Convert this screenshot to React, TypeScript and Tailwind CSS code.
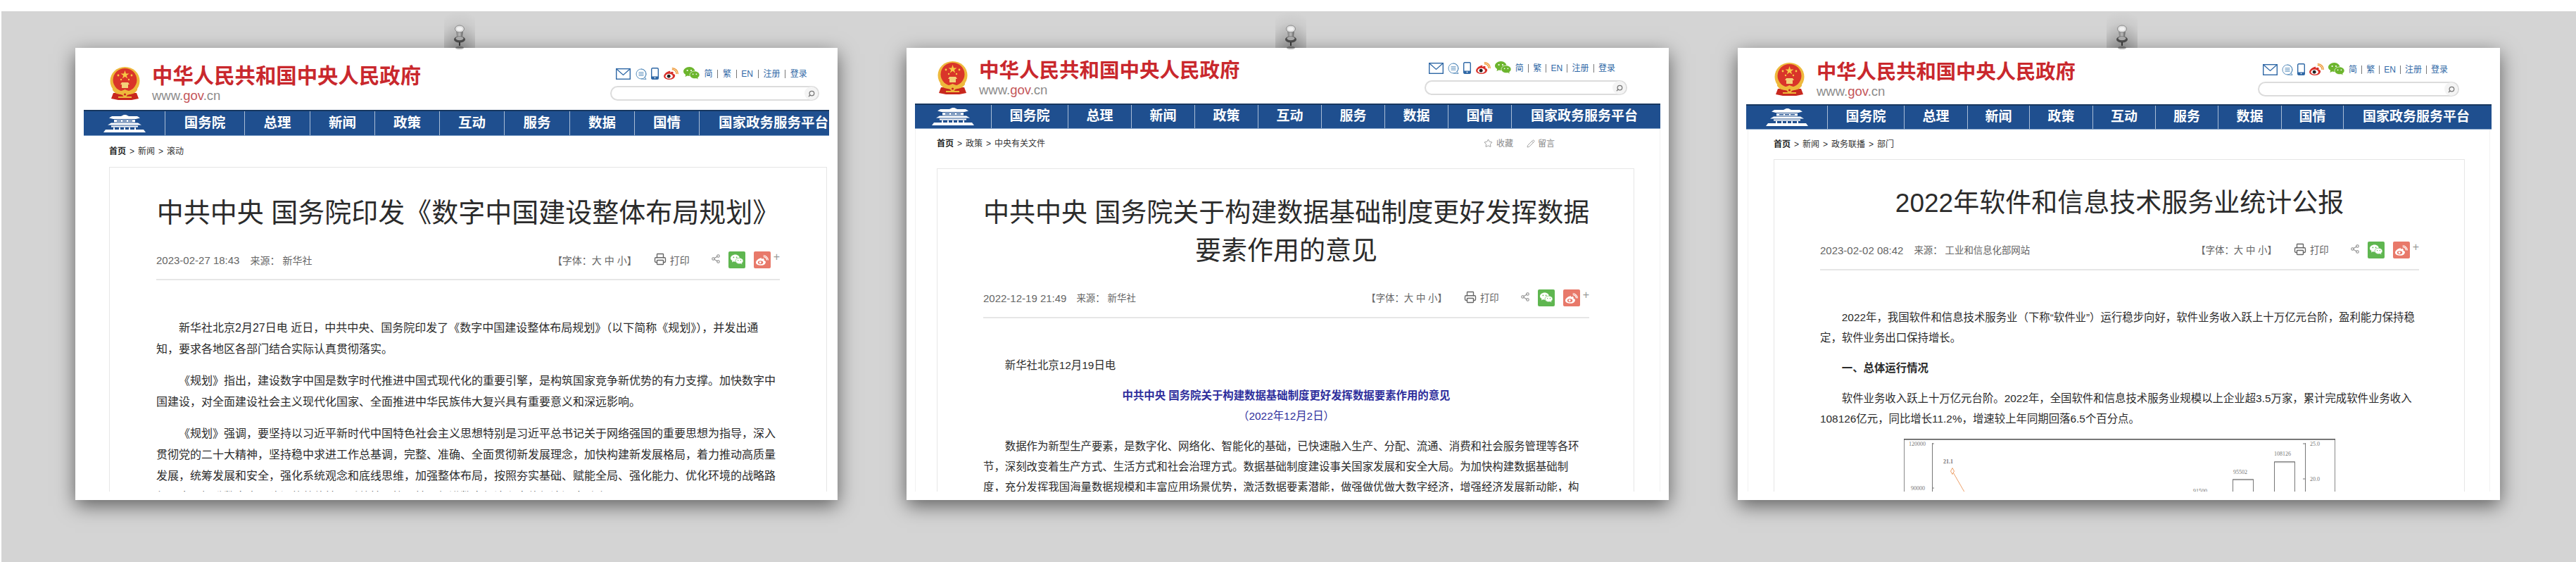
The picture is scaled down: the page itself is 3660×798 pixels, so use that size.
import React from 'react';
import { Printer, Share2, Star, Pencil, Search } from 'lucide-react';

const FONT = "font-['Liberation_Sans','Noto_Sans_CJK_SC',sans-serif]";

const Emblem = () => (
  <svg viewBox="0 0 43 47" className="w-[43px] h-[47px] shrink-0">
    <path d="M5 37 L2 45 L12 47 L31 47 L41 45 L38 37 Z" fill="#c8281e" />
    <ellipse cx="21.5" cy="20" rx="21" ry="20" fill="#eeb93c" />
    <ellipse cx="21.5" cy="18.5" rx="17" ry="16.5" fill="#d9352a" />
    <polygon points="21.5,5 23,9.5 27.5,9.5 23.8,12.2 25.2,16.5 21.5,13.8 17.8,16.5 19.2,12.2 15.5,9.5 20,9.5" fill="#f6c945" />
    <circle cx="12" cy="12" r="1.4" fill="#f6c945" />
    <circle cx="31" cy="12" r="1.4" fill="#f6c945" />
    <circle cx="16" cy="18" r="1.2" fill="#f6c945" />
    <circle cx="27" cy="18" r="1.2" fill="#f6c945" />
    <path d="M15 25 L17 22 L26 22 L28 25 L26 25 L26 30 L17 30 L17 25 Z" fill="#f3d27a" />
    <path d="M4 28 C9 37 15 35 21.5 32 C28 35 34 37 39 28 L39 33 C33 41 27 39 21.5 36 C16 39 10 41 4 33 Z" fill="#eeb93c" />
    <circle cx="21.5" cy="39" r="3.4" fill="#eeb93c" />
    <circle cx="21.5" cy="39" r="1.6" fill="#c8281e" />
    <rect x="12" y="42" width="19" height="2" fill="#eeb93c" />
  </svg>
);

const HomeIcon = () => (
  <svg viewBox="0 0 60 25" className="w-[60px] h-[25px]">
    <g fill="#ffffff">
      <path d="M29 0 L32 0 L36 2 L48 2 L52 4.5 L46 6 L14 6 L8 4.5 L12 2 L25 2 Z" />
      <rect x="15" y="7" width="30" height="3.5" />
      <path d="M11 11.5 L49 11.5 L54 14.5 L6 14.5 Z" />
      <rect x="11" y="15.5" width="38" height="2" />
      <path d="M3 21 L57 21 L60 25 L0 25 Z" />
      <rect x="14" y="18" width="2" height="3" />
      <rect x="22" y="18" width="2" height="3" />
      <rect x="29" y="18" width="2" height="3" />
      <rect x="36" y="18" width="2" height="3" />
      <rect x="44" y="18" width="2" height="3" />
    </g>
    <g fill="#1f4f8f">
      <rect x="19" y="8" width="6" height="1.4" />
      <rect x="27" y="8" width="6" height="1.4" />
      <rect x="35" y="8" width="6" height="1.4" />
    </g>
  </svg>
);

const WeiboColor = () => (
  <svg viewBox="0 0 22 18" className="w-[21px] h-[17px] shrink-0">
    <path d="M9 5 C4 6 0 10 0 13 C0 16 4 18 9 18 C14 18 17 15 17 12 C17 10 15 9.5 14 9.5 C15 7 14 6 12.5 6 C11.5 6 10 7 9.5 7.5 C10 5.5 10 4.8 9 5 Z" fill="#d8302a" />
    <ellipse cx="8" cy="13" rx="5.5" ry="3.8" fill="#ffffff" />
    <circle cx="7.5" cy="13" r="2.6" fill="#222222" />
    <path d="M13 3 A6 6 0 0 1 19 9" stroke="#ee9a3a" strokeWidth="1.6" fill="none" strokeLinecap="round" />
    <path d="M13 0.8 A8.5 8.5 0 0 1 21.3 9" stroke="#ee9a3a" strokeWidth="1.6" fill="none" strokeLinecap="round" />
  </svg>
);

const WechatColor = () => (
  <svg viewBox="0 0 23 19" className="w-[23px] h-[19px] shrink-0">
    <path d="M8.5 0 C13 0 16.5 3 16.5 6.5 C16.5 10 13 13 8.5 13 C7.5 13 6.5 12.8 5.5 12.5 L2.5 14 L3.2 11 C1.2 9.8 0 8.2 0 6.5 C0 3 4 0 8.5 0 Z" fill="#6cb52d" />
    <path d="M16 6 C19.8 6 23 8.4 23 11.3 C23 12.8 22.1 14.2 20.6 15.2 L21.2 18 L18.5 16.4 C17.7 16.6 16.9 16.7 16 16.7 C12.2 16.7 9 14.3 9 11.3 C9 8.4 12.2 6 16 6 Z" fill="#6cb52d" stroke="#ffffff" strokeWidth="0.7" />
    <circle cx="5.6" cy="5" r="1.1" fill="#ffffff" />
    <circle cx="11" cy="5" r="1.1" fill="#ffffff" />
    <circle cx="13.6" cy="10.3" r="0.9" fill="#ffffff" />
    <circle cx="18.4" cy="10.3" r="0.9" fill="#ffffff" />
  </svg>
);

const TopIcons = ({ className }: { className: string }) => (
  <div className={`flex items-center justify-between h-[19px] text-[12px] text-[#2f68a6] ${className}`}>
    <svg viewBox="0 0 21 16" className="w-[21px] h-[16px] shrink-0">
      <rect x="0.7" y="0.7" width="19.6" height="14.6" fill="none" stroke="#2f68a6" strokeWidth="1.4" />
      <path d="M1 1 L10.5 9.5 L20 1" fill="none" stroke="#2f68a6" strokeWidth="1.3" />
    </svg>
    <svg viewBox="0 0 16 16" className="w-[16px] h-[16px] shrink-0">
      <path d="M8 1 A7 7 0 1 1 8 15 L15 15.5 L13.2 12.5 A7 7 0 0 0 8 1 Z M8 1 A7 7 0 0 0 8 15" fill="none" stroke="#5b8fbd" strokeWidth="1" />
      <path d="M4.5 5.8 H11.5 M4.5 8 H11.5 M4.5 10.2 H11.5" stroke="#5b8fbd" strokeWidth="1" />
    </svg>
    <svg viewBox="0 0 11 17" className="w-[11px] h-[17px] shrink-0">
      <rect x="0.7" y="0.7" width="9.6" height="15.6" rx="1.5" fill="#ffffff" stroke="#2f68a6" strokeWidth="1.4" />
      <rect x="0.7" y="12.5" width="9.6" height="3.8" fill="#2f68a6" />
      <circle cx="5.5" cy="14.4" r="0.9" fill="#ffffff" />
    </svg>
    <WeiboColor />
    <WechatColor />
    <span>简</span>
    <span className="w-px h-[12px] bg-[#777777]" />
    <span>繁</span>
    <span className="w-px h-[12px] bg-[#777777]" />
    <span>EN</span>
    <span className="w-px h-[12px] bg-[#777777]" />
    <span>注册</span>
    <span className="w-px h-[12px] bg-[#777777]" />
    <span>登录</span>
  </div>
);

const SearchBox = () => (
  <div className="flex items-center justify-end h-[21px] rounded-full border-2 border-[#dcdcdc] bg-white">
    <span className="flex items-center justify-center w-[19px] h-[19px] rounded-full bg-[#f4f4f4]">
      <Search className="w-[10px] h-[10px] text-[#777777] -scale-x-100" strokeWidth={3} />
    </span>
  </div>
);

const MetaRight = ({ className }: { className: string }) => (
  <div className={`flex items-center text-[#666666] ${className}`}>
    <span className="whitespace-nowrap mt-[3px]">【字体：大 中 小】</span>
    <Printer className="w-[18px] h-[18px] ml-[24px] mb-[3px] text-[#666666]" strokeWidth={1.8} />
    <span className="ml-[5px] mt-[3px]">打印</span>
    <Share2 className="w-[14px] h-[15px] ml-[30px] mb-[4px] text-[#888888]" strokeWidth={1.8} />
    <span className="flex items-center justify-center w-[24px] h-[24px] ml-[11px] rounded-[2px] bg-[#5fb650]">
      <svg viewBox="0 0 23 19" className="w-[18px] h-[16px]">
        <path d="M8.5 0 C13 0 16.5 3 16.5 6.5 C16.5 10 13 13 8.5 13 C7.5 13 6.5 12.8 5.5 12.5 L2.5 14 L3.2 11 C1.2 9.8 0 8.2 0 6.5 C0 3 4 0 8.5 0 Z" fill="#ffffff" />
        <path d="M16 6 C19.8 6 23 8.4 23 11.3 C23 12.8 22.1 14.2 20.6 15.2 L21.2 18 L18.5 16.4 C17.7 16.6 16.9 16.7 16 16.7 C12.2 16.7 9 14.3 9 11.3 C9 8.4 12.2 6 16 6 Z" fill="#ffffff" stroke="#5fb650" strokeWidth="0.8" />
        <circle cx="5.6" cy="5" r="1.1" fill="#5fb650" />
        <circle cx="11" cy="5" r="1.1" fill="#5fb650" />
        <circle cx="13.6" cy="10.3" r="0.9" fill="#5fb650" />
        <circle cx="18.4" cy="10.3" r="0.9" fill="#5fb650" />
      </svg>
    </span>
    <span className="flex items-center justify-center w-[24px] h-[24px] ml-[12px] rounded-[2px] bg-[#e8796a]">
      <svg viewBox="0 0 22 18" className="w-[18px] h-[15px]">
        <path d="M9 5 C4 6 0 10 0 13 C0 16 4 18 9 18 C14 18 17 15 17 12 C17 10 15 9.5 14 9.5 C15 7 14 6 12.5 6 C11.5 6 10 7 9.5 7.5 C10 5.5 10 4.8 9 5 Z" fill="#ffffff" />
        <ellipse cx="8" cy="13" rx="4.6" ry="3" fill="#e8796a" />
        <circle cx="7.5" cy="13" r="1.8" fill="#ffffff" />
        <path d="M13 3 A6 6 0 0 1 19 9" stroke="#ffffff" strokeWidth="1.4" fill="none" />
        <path d="M13 0.8 A8.5 8.5 0 0 1 21.3 9" stroke="#ffffff" strokeWidth="1.4" fill="none" />
      </svg>
    </span>
    <span className="ml-[4px] mb-[8px] text-[16px] leading-none text-[#999999]">+</span>
  </div>
);

const Pin = () => (
  <svg viewBox="0 0 80 56" className="absolute -top-[52px] left-1/2 ml-[-36px] w-[80px] h-[56px] z-10 pointer-events-none">
    <defs>
      <radialGradient id="pinHalo" cx="50%" cy="100%" r="100%">
        <stop offset="0%" stopColor="#000000" stopOpacity="0.28" />
        <stop offset="70%" stopColor="#000000" stopOpacity="0.04" />
        <stop offset="100%" stopColor="#000000" stopOpacity="0" />
      </radialGradient>
      <linearGradient id="pinBody" x1="0" x2="1" y1="0" y2="0">
        <stop offset="0%" stopColor="#777777" />
        <stop offset="50%" stopColor="#bdbdbd" />
        <stop offset="100%" stopColor="#555555" />
      </linearGradient>
    </defs>
    <rect x="18" y="0" width="44" height="52" fill="url(#pinHalo)" />
    <path d="M35 26 L45 26 L44 36 L36 36 Z" fill="url(#pinBody)" />
    <ellipse cx="40" cy="25" rx="6.5" ry="5" fill="#dddddd" stroke="#8a8a8a" strokeWidth="1" />
    <ellipse cx="40" cy="25" rx="4" ry="2.8" fill="#f2f2f2" />
    <ellipse cx="40" cy="40" rx="8" ry="4.5" fill="#4a4a4a" />
    <ellipse cx="40" cy="38.5" rx="5.5" ry="2.8" fill="#a8a8a8" />
    <rect x="39" y="44" width="2" height="5" fill="#333333" />
    <ellipse cx="40" cy="52" rx="6" ry="2" fill="#000000" opacity="0.3" />
  </svg>
);

const Chart = () => (
  <svg viewBox="0 0 613 100" className="block mx-auto w-[613px] h-[100px]">
    <rect x="0.5" y="0.75" width="612" height="110" fill="none" stroke="#888888" strokeWidth="1" />
    <path d="M0 0.75 H613" stroke="#555555" strokeWidth="1.5" />
    <path d="M40.5 6 V100 M570.5 6 V100" stroke="#777777" strokeWidth="1" />
    <path d="M40.5 7 H43 M40.5 70 H43 M570.5 7 H567 M570.5 57 H567" stroke="#777777" strokeWidth="1" />
    <g fontSize="8" fill="#777777" fontFamily="'Liberation Serif', serif">
      <text x="7" y="10">120000</text>
      <text x="10" y="73">90000</text>
      <text x="577" y="10">25.0</text>
      <text x="577" y="60">20.0</text>
      <text x="56" y="35" fontWeight="700">21.1</text>
      <text x="468" y="50">95502</text>
      <text x="526" y="24">108126</text>
      <text x="411" y="77">91500</text>
    </g>
    <path d="M69 46 L103 105" stroke="#eda06a" strokeWidth="1" />
    <path d="M69 41.5 L71.5 46 L69 50.5 L66.5 46 Z" fill="#ffffff" stroke="#eda06a" strokeWidth="1" />
    <path d="M467.5 110 V57.5 H496.5 V110" fill="none" stroke="#777777" strokeWidth="1" />
    <path d="M526.5 110 V32.5 H555.5 V110" fill="none" stroke="#777777" strokeWidth="1" />
    <path d="M468 58.5 H496 M527 33.5 H555" stroke="#bbbbbb" strokeWidth="1.5" />
  </svg>
);

interface PageConfig {
  headerClass: string;
  iconsClass: string;
  rightClass: string;
  titleClass: string;
  logoGapClass: string;
  navCells: string[];
  navFontClass: string;
  navClass: string;
  wrapClass: string;
  crumbClass: string;
  innerClass: string;
  titleTopClass: string;
  metaTopClass: string;
  metaTextClass: string;
  bodyClass: string;
  crumbs: string[];
  actions?: boolean;
  heading: React.ReactNode;
  date: string;
  source: string;
  dateGapClass: string;
  children: React.ReactNode;
}

const NAV = ['国务院', '总理', '新闻', '政策', '互动', '服务', '数据', '国情'];

const Page = (p: PageConfig) => (
  <div className="relative flex flex-col w-[1083px] h-[642px] shrink-0 bg-white pb-[12px] shadow-[0_8px_26px_rgba(0,0,0,0.55)]">
    <Pin />
    <div className={`flex items-start justify-between shrink-0 ${p.headerClass}`}>
      <div className={`flex items-start ${p.logoGapClass}`}>
        <Emblem />
        <div className="-mt-[5.5px]">
          <div className={`font-bold leading-[36px] text-[#c9282d] whitespace-nowrap ${p.titleClass}`}>中华人民共和国中央人民政府</div>
          <div className="text-[18.5px] leading-[18px] mt-[1px] text-[#8c8c8c]">
            www.<span className="text-[#c4565a]">gov</span>.cn
          </div>
        </div>
      </div>
      <div className={`flex flex-col gap-[8px] ${p.rightClass}`}>
        <TopIcons className={p.iconsClass} />
        <SearchBox />
      </div>
    </div>
    <div className={`flex shrink-0 overflow-hidden bg-[#1f4f8f] border-t-2 border-t-[#17375f] border-b border-b-[#7f9fc6] text-white font-bold ${p.navClass} ${p.navFontClass}`}>
      <div className={`flex items-center justify-center shrink-0 ${p.navCells[0]}`}>
        <HomeIcon />
      </div>
      {NAV.map((n, i) => (
        <div key={n} className={`flex items-center justify-center shrink-0 border-l border-l-[#a9bdd6] ${p.navCells[i + 1]}`}>
          {n}
        </div>
      ))}
      <div className={`flex items-center shrink-0 pl-[27px] whitespace-nowrap border-l border-l-[#a9bdd6] ${p.navCells[9]}`}>国家政务服务平台</div>
    </div>
    <div className={`flex flex-col flex-1 min-h-0 ${p.wrapClass}`}>
      <div className={`flex items-center justify-between shrink-0 text-[12px] text-[#333333] ${p.crumbClass}`}>
        <div className="flex items-center gap-[5px]">
          <span className="font-bold text-[#222222]">首页</span>
          {p.crumbs.map((c) => (
            <React.Fragment key={c}>
              <span>&gt;</span>
              <span>{c}</span>
            </React.Fragment>
          ))}
        </div>
        {p.actions && (
          <div className="flex items-center mr-[113px] text-[#888888]">
            <Star className="w-[13px] h-[13px]" strokeWidth={1.5} />
            <span className="ml-[5px]">收藏</span>
            <Pencil className="w-[12px] h-[12px] ml-[19px]" strokeWidth={1.5} />
            <span className="ml-[4px]">留言</span>
          </div>
        )}
      </div>
      <div className="flex-1 min-h-0 overflow-hidden border-x border-t border-[#e6e6e6]">
        <div className={p.innerClass}>
          <h1 className={`text-center leading-[54px] font-normal whitespace-nowrap text-[#2b2b2b] ${p.titleTopClass}`}>{p.heading}</h1>
          <div className={`flex items-center justify-between h-[24px] ${p.metaTopClass}`}>
            <div className={`flex items-center text-[#666666] mt-[3px] ${p.metaTextClass}`}>
              <span className={`text-[15px] ${p.dateGapClass}`}>{p.date}</span>
              <span className="whitespace-nowrap mr-[4px]">来源：</span>
              <span className="whitespace-nowrap">{p.source}</span>
            </div>
            <MetaRight className={p.metaTextClass} />
          </div>
          <div className="border-b-2 border-[#e6e6e6] mt-[15px]" />
          <div className={`text-[#2b2b2b] ${p.bodyClass}`}>{p.children}</div>
        </div>
      </div>
    </div>
  </div>
);

const P1 = 'indent-[2em] text-[16px] leading-[30px] mb-[15px]';
const P2 = 'indent-[2em] text-[15.4px] leading-[29px] mb-[14px]';

const App: React.FC = () => {
  return (
    <div className={`bg-white w-[3660px] h-[798px] pt-[16px] pl-[2px] overflow-hidden ${FONT}`}>
      <div className="flex items-start gap-[98px] h-[782px] bg-[#d4d4d4] pt-[52px] pl-[105px]">
        <Page
          headerClass="h-[88px] pt-[27px] pl-[49px] pr-[26px]"
          logoGapClass="gap-[17px]"
          titleClass="text-[29.4px]"
          rightClass="w-[297px]"
          iconsClass="ml-[8px] mr-[17px]"
          navClass="mx-[12px] h-[37px]"
          navFontClass="text-[19.5px]"
          navCells={['w-[115px]', 'w-[113px]', 'w-[93px]', 'w-[92px]', 'w-[92px]', 'w-[92px]', 'w-[93px]', 'w-[92px]', 'w-[92px]', 'w-[186px]']}
          wrapClass="pl-[48px] pr-[15px]"
          crumbClass="h-[44px]"
          innerClass="px-[66px]"
          titleTopClass="pt-[37px] text-[38px]"
          metaTopClass="mt-[28px]"
          metaTextClass="text-[14px]"
          bodyClass="pt-[53px]"
          crumbs={['新闻', '滚动']}
          heading="中共中央 国务院印发《数字中国建设整体布局规划》"
          date="2023-02-27 18:43"
          dateGapClass="mr-[15px]"
          source="新华社"
        >
          <p className={P1}>新华社北京2月27日电 近日，中共中央、国务院印发了《数字中国建设整体布局规划》（以下简称《规划》），并发出通知，要求各地区各部门结合实际认真贯彻落实。</p>
          <p className={P1}>《规划》指出，建设数字中国是数字时代推进中国式现代化的重要引擎，是构筑国家竞争新优势的有力支撑。加快数字中国建设，对全面建设社会主义现代化国家、全面推进中华民族伟大复兴具有重要意义和深远影响。</p>
          <p className={P1}>《规划》强调，要坚持以习近平新时代中国特色社会主义思想特别是习近平总书记关于网络强国的重要思想为指导，深入贯彻党的二十大精神，坚持稳中求进工作总基调，完整、准确、全面贯彻新发展理念，加快构建新发展格局，着力推动高质量发展，统筹发展和安全，强化系统观念和底线思维，加强整体布局，按照夯实基础、赋能全局、强化能力、优化环境的战略路径，全面提升数字中国建设的整体性、系统性、协同性，促进数字经济和实体经济深度融合。</p>
        </Page>
        <Page
          headerClass="h-[79px] pt-[19px] pl-[44px] pr-[59px]"
          logoGapClass="gap-[16px]"
          titleClass="text-[28.5px]"
          rightClass="w-[288px]"
          iconsClass="ml-[6px] mr-[17px]"
          navClass="mx-[12px] h-[36px]"
          navFontClass="text-[19px]"
          navCells={['w-[108px]', 'w-[109px]', 'w-[90px]', 'w-[90px]', 'w-[90px]', 'w-[90px]', 'w-[90px]', 'w-[90px]', 'w-[90px]', 'w-[213px]']}
          wrapClass="mx-[12px] pl-[30px] pr-[36px] border-x border-[#f2f2f2]"
          crumbClass="h-[41px] mb-[15px]"
          innerClass="pl-[65px] pr-[63px]"
          titleTopClass="pt-[36px] text-[37px]"
          metaTopClass="mt-[27px]"
          metaTextClass="text-[13.4px]"
          bodyClass="pt-[52px]"
          crumbs={['政策', '中央有关文件']}
          actions
          heading={<>中共中央 国务院关于构建数据基础制度更好发挥数据<br />要素作用的意见</>}
          date="2022-12-19 21:49"
          dateGapClass="mr-[14px]"
          source="新华社"
        >
          <p className={P2}>新华社北京12月19日电</p>
          <p className="text-center text-[15.4px] leading-[29px] font-bold text-[#2e2e9c]">中共中央 国务院关于构建数据基础制度更好发挥数据要素作用的意见</p>
          <p className="text-center text-[15.4px] leading-[29px] mb-[14px] text-[#2e2e9c]">（2022年12月2日）</p>
          <p className={P2}>数据作为新型生产要素，是数字化、网络化、智能化的基础，已快速融入生产、分配、流通、消费和社会服务管理等各环节，深刻改变着生产方式、生活方式和社会治理方式。数据基础制度建设事关国家发展和安全大局。为加快构建数据基础制度，充分发挥我国海量数据规模和丰富应用场景优势，激活数据要素潜能，做强做优做大数字经济，增强经济发展新动能，构筑国家竞争新优势，现提出如下意见。</p>
        </Page>
        <Page
          headerClass="h-[80px] pt-[21px] pl-[52px] pr-[58px]"
          logoGapClass="gap-[17px]"
          titleClass="text-[28.3px]"
          rightClass="w-[286px]"
          iconsClass="ml-[7px] mr-[16px]"
          navClass="mx-[12px] h-[36px]"
          navFontClass="text-[19px]"
          navCells={['w-[115px]', 'w-[109px]', 'w-[90px]', 'w-[88px]', 'w-[90px]', 'w-[89px]', 'w-[89px]', 'w-[90px]', 'w-[88px]', 'w-[212px]']}
          wrapClass="mx-[14px] pl-[36px] pr-[35px] border-x border-[#f2f2f2]"
          crumbClass="h-[42px]"
          innerClass="pl-[65px] pr-[64px]"
          titleTopClass="pt-[35px] text-[37px]"
          metaTopClass="mt-[27px]"
          metaTextClass="text-[13.4px]"
          bodyClass="pt-[52px]"
          crumbs={['新闻', '政务联播', '部门']}
          heading="2022年软件和信息技术服务业统计公报"
          date="2023-02-02 08:42"
          dateGapClass="mr-[15px]"
          source="工业和信息化部网站"
        >
          <p className={P2}>2022年，我国软件和信息技术服务业（下称“软件业”）运行稳步向好，软件业务收入跃上十万亿元台阶，盈利能力保持稳定，软件业务出口保持增长。</p>
          <p className={`${P2} font-bold`}>一、总体运行情况</p>
          <p className={P2}>软件业务收入跃上十万亿元台阶。2022年，全国软件和信息技术服务业规模以上企业超3.5万家，累计完成软件业务收入108126亿元，同比增长11.2%，增速较上年同期回落6.5个百分点。</p>
          <Chart />
        </Page>
      </div>
    </div>
  );
};

export default App;
